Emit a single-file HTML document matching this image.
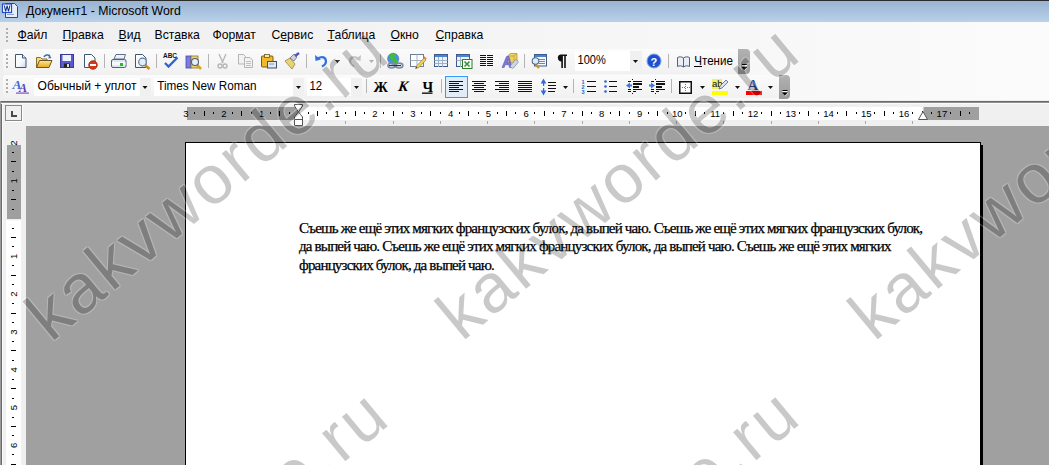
<!DOCTYPE html>
<html><head><meta charset="utf-8">
<style>
*{margin:0;padding:0;box-sizing:border-box}
html,body{width:1049px;height:465px;overflow:hidden;background:#f0f0f0;font-family:"Liberation Sans",sans-serif;position:relative}
.a{position:absolute}
#title{left:0;top:0;width:1049px;height:22px;border-top:1px solid #2b2b2b;background:linear-gradient(#99b3d1,#b9d1ea)}
#title .t{left:26px;top:3.3px;font-size:12.3px;line-height:14px;color:#000;white-space:nowrap}
#dock{left:0;top:22px;width:1049px;height:78px;background:linear-gradient(90deg,#efefef,#fbfbfb)}
.menu{top:29px;margin-left:-0.5px;font-size:12.2px;line-height:13px;color:#000;white-space:nowrap}
.menu u{text-decoration:underline;text-underline-offset:1px}
.tb{border-radius:3px;background:linear-gradient(#fbfbfb,#f1f1f1)}
#line{left:1px;top:101px;width:1048px;height:3px;background:linear-gradient(#6a6a6a 0 1px,#8f8f8f 1px 2px,#fbfbfb 2px 3px)}
#ruler{left:0;top:103px;width:1049px;height:364px;background:#f0f0f0}
#lb{left:0;top:101px;width:3px;height:365px;background:linear-gradient(90deg,#9a9a9a 0 1px,#6a6a6a 1px 2px,#fbfbfb 2px 3px)}
#gray{left:26px;top:126px;width:1023px;height:339px;background:#a0a0a0}
#page{left:185px;top:142px;width:796px;height:400px;background:#fff;border:1px solid #000}
#shadow{left:981px;top:145px;width:2px;height:400px;background:#000}
.doc{left:299px;top:219px;font-family:"Liberation Serif",serif;font-size:15px;line-height:18.4px;color:#000;white-space:nowrap;letter-spacing:-0.815px;-webkit-text-stroke:0.25px #000}
svg.ov{position:absolute;left:0;top:0}
.wml{position:absolute;left:0;top:0;width:1049px;height:465px;filter:url(#halo)}
.wm{position:absolute;font-family:"Liberation Sans",sans-serif;font-size:69px;line-height:1;white-space:nowrap;letter-spacing:2.95px;color:rgba(0,0,0,0.21);transform-origin:0 0;left:0;top:0}
</style></head><body>
<div id="title" class="a"><div class="t a">Документ1 - Microsoft Word</div></div>
<div id="dock" class="a"></div>
<div class="a menu" style="left:18px"><u>Ф</u>айл</div>
<div class="a menu" style="left:63px"><u>П</u>равка</div>
<div class="a menu" style="left:119px"><u>В</u>ид</div>
<div class="a menu" style="left:155px">Вст<u>а</u>вка</div>
<div class="a menu" style="left:213px">Фор<u>м</u>ат</div>
<div class="a menu" style="left:272px">С<u>е</u>рвис</div>
<div class="a menu" style="left:328px"><u>Т</u>аблица</div>
<div class="a menu" style="left:391px"><u>О</u>кно</div>
<div class="a menu" style="left:436px"><u>С</u>правка</div>
<div class="a tb" style="left:3px;top:49px;width:745px;height:25px"></div>
<div class="a tb" style="left:3px;top:75px;width:785px;height:23px"></div>
<div id="ruler" class="a"></div><div id="lb" class="a"></div><div id="line" class="a"></div>
<div id="gray" class="a"></div>
<div id="page" class="a"></div>
<div id="shadow" class="a"></div>
<svg class="ov" width="1049" height="465" viewBox="0 0 1049 465">
<!-- grips -->
<g fill="#aeaeae">
<rect x="6" y="28" width="2" height="2"/><rect x="6" y="32" width="2" height="2"/><rect x="6" y="36" width="2" height="2"/><rect x="6" y="40" width="2" height="2"/>
<rect x="6" y="54" width="2" height="2"/><rect x="6" y="58" width="2" height="2"/><rect x="6" y="62" width="2" height="2"/><rect x="6" y="66" width="2" height="2"/>
<rect x="6" y="79" width="2" height="2"/><rect x="6" y="83" width="2" height="2"/><rect x="6" y="87" width="2" height="2"/><rect x="6" y="91" width="2" height="2"/>
</g>
<!-- separators tb1 -->
<g fill="#b4b4b4">
<rect x="104" y="54" width="1" height="14"/><rect x="156" y="54" width="1" height="14"/><rect x="208" y="54" width="1" height="14"/>
<rect x="306" y="54" width="1" height="14"/><rect x="380" y="54" width="1" height="14"/><rect x="524" y="54" width="1" height="14"/>
<rect x="668" y="54" width="1" height="14"/>
<rect x="366" y="79" width="1" height="14"/><rect x="441" y="79" width="1" height="14"/><rect x="573" y="79" width="1" height="14"/><rect x="671" y="79" width="1" height="14"/>
</g>
<defs>
<linearGradient id="pg" x1="0" y1="0" x2="1" y2="1"><stop offset="0" stop-color="#fff"/><stop offset="0.6" stop-color="#f4f7fb"/><stop offset="1" stop-color="#c9d5e6"/></linearGradient>
<linearGradient id="fold" x1="0" y1="0" x2="0" y2="1"><stop offset="0" stop-color="#fbe89a"/><stop offset="1" stop-color="#e9a91c"/></linearGradient>
<linearGradient id="chev" x1="0" y1="0" x2="0" y2="1"><stop offset="0" stop-color="#b2b2b2"/><stop offset="1" stop-color="#9a9a9a"/></linearGradient>
</defs>
<!-- new doc -->
<path d="M15.5 54.5h7l3.5 3.5v9.5h-10.5z" fill="url(#pg)" stroke="#3f5677"/>
<path d="M22.5 54.5v3.5h3.5" fill="#e0e8f2" stroke="#3f5677"/>
<!-- open -->
<path d="M36.5 67.5v-10h4l1.5 1.5h5v8.5z" fill="#f7dc7a" stroke="#8b6f37"/>
<path d="M36.5 67.5l3-7h12.5l-3 7z" fill="url(#fold)" stroke="#6e5420"/>
<path d="M44 57c1-2 4-3 6-1" fill="none" stroke="#3d6db3" stroke-width="1.5"/><path d="M49 54.5l2.5 3.5l-3 0.5z" fill="#3d6db3"/>
<!-- save -->
<rect x="60.5" y="54.5" width="13" height="13" fill="#5a5ad0" stroke="#3b3b9a"/>
<rect x="62.5" y="55" width="8.5" height="6" fill="#eef2fb"/>
<rect x="64" y="63.5" width="6" height="4" fill="#222"/><rect x="67" y="64" width="2" height="3" fill="#ddd"/>
<!-- permission doc -->
<path d="M84.5 54.5h7l3.5 3.5v9.5h-10.5z" fill="url(#pg)" stroke="#3f5677"/>
<circle cx="93" cy="65" r="4.3" fill="#d63a12" stroke="#a8260a" stroke-width="0.8"/><rect x="90" y="64" width="6" height="2" fill="#fff"/>
<!-- print -->
<path d="M114 59l2-4.5h9.5l-1.5 4.5z" fill="#eef1f6" stroke="#5d6f8c"/>
<rect x="111.5" y="59.5" width="14.5" height="8" rx="1.5" fill="#dfe6f0" stroke="#4f6080"/>
<rect x="112" y="62" width="13.5" height="3" fill="#f7f9fc"/>
<rect x="120" y="63" width="3" height="3" fill="#1fbf1f"/>
<!-- preview -->
<path d="M135.5 54.5h7l3.5 3.5v9.5h-10.5z" fill="url(#pg)" stroke="#3f5677"/>
<path d="M145 65l4.5 4" stroke="#d08a1a" stroke-width="2.5"/>
<circle cx="142.5" cy="62" r="3.8" fill="#dfeefa" stroke="#667a90" stroke-width="1.2"/>
<!-- spell ABC -->
<text x="163" y="58.3" font-family="Liberation Sans" font-weight="bold" font-size="7.3" fill="#111" textLength="14" lengthAdjust="spacingAndGlyphs">ABC</text>
<path d="M165 63l3.5 3.5l9-9" fill="none" stroke="#2e62d9" stroke-width="2.3"/>
<!-- research -->
<rect x="186" y="56" width="5" height="12" fill="#7b7be6" stroke="#4848b0" stroke-width="0.8"/>
<rect x="191" y="56" width="7" height="12" fill="#f1d36b" stroke="#8b7030" stroke-width="0.8"/>
<path d="M197 65l4 4" stroke="#d7a318" stroke-width="2.5"/>
<circle cx="195" cy="62" r="3.5" fill="#e4effa" stroke="#535f70" stroke-width="1.1"/>
<!-- cut disabled -->
<g stroke="#b4b4b4" fill="none" stroke-width="1.3"><path d="M219 54l4 9M226 54l-4 9"/><circle cx="220" cy="66" r="2"/><circle cx="225" cy="66" r="2"/></g>
<!-- copy disabled -->
<path d="M238.5 54.5h5l2 2v7.5h-7z" fill="#f2f2f2" stroke="#b5b5b5"/>
<path d="M244.5 57.5h5.5l2.5 2.5v7.5h-8z" fill="#f2f2f2" stroke="#b5b5b5"/>
<g fill="#c0c0c0"><rect x="246" y="61" width="5" height="1"/><rect x="246" y="63" width="5" height="1"/><rect x="246" y="65" width="5" height="1"/></g>
<!-- paste -->
<rect x="261.5" y="56" width="11.5" height="11" rx="1" fill="#f0b92a" stroke="#7a5a1a"/>
<rect x="264.5" y="54.5" width="5" height="3" fill="#f6e7a2" stroke="#6b5a2a" stroke-width="0.8"/>
<rect x="267.5" y="61.5" width="9" height="6.5" fill="#dfe7f2" stroke="#3f5170"/>
<rect x="269" y="63.5" width="5" height="1" fill="#8a9ab8"/>
<!-- format painter -->
<path d="M285 61l5-3l5 6l-3 5z" fill="#e9d377" stroke="#9b8136" stroke-width="0.8"/>
<path d="M290 58l4-4l3 3l-3 4z" fill="#cfd3dc" stroke="#666d7c" stroke-width="0.8"/>
<path d="M295 56l4-3" stroke="#5252c9" stroke-width="2.6"/>
<!-- undo -->
<path d="M318 58.5c4-3 8-1 8 3c0 2.5-2 4-4 5" fill="none" stroke="#2f73e0" stroke-width="2.2"/>
<path d="M315 55l0.5 6l5.5-1.5z" fill="#2f73e0"/>
<path d="M335 60h5l-2.5 3z" fill="#111"/>
<!-- redo disabled -->
<path d="M358 58.5c-4-3-8-1-8 3c0 2.5 2 4 4 5" fill="none" stroke="#c4c4c4" stroke-width="2.2"/>
<path d="M361 55l-0.5 6l-5.5-1.5z" fill="#c4c4c4"/>
<path d="M369 60h5l-2.5 3z" fill="#b0b0b0"/>
<!-- hyperlink -->
<circle cx="393.2" cy="58.8" r="5.6" fill="#4c8fe6" stroke="#3a6fb8" stroke-width="0.6"/>
<path d="M389.5 55c1.5-1.8 4.5-2.2 6.5-0.8c-0.5 1.5-2 1.8-1.5 3.5c0.8 1.5 2.5 1.5 3.5 2.8c-0.5 1.8-1.5 3-3 3.5c-0.2-1.8-1.5-2.5-2.5-3.5c-1-1.2-2.5-1.5-3-3z" fill="#3fbe3a"/>
<g fill="none" stroke="#7d8ba3" stroke-width="1.7"><ellipse cx="391.6" cy="65.6" rx="3.6" ry="2.4"/><ellipse cx="399.2" cy="65.6" rx="3.6" ry="2.4"/></g>
<path d="M389 65.6h12" stroke="#26385a" stroke-width="1.2"/>
<!-- tables & borders -->
<rect x="410.5" y="54.5" width="13" height="12" fill="#fff" stroke="#6d8096"/>
<path d="M417 54.5v12M410.5 60.5h13" stroke="#a4b2c4"/>
<path d="M415.5 68.5l1.5-3l7-7.5l2 2l-7 7.5z" fill="#f0cf5a" stroke="#8a7030" stroke-width="0.6"/>
<path d="M423.5 57.5l1-1.2l2.2 2.2l-1.2 1.2z" fill="#e07a6a"/>
<path d="M415.5 68.5l0.8-1.6l0.9 0.9z" fill="#111"/>
<!-- insert table -->
<rect x="434.5" y="54.5" width="13" height="12" fill="#eef3fa" stroke="#3f5a86"/>
<rect x="435" y="55" width="12" height="2" fill="#4a84d8"/>
<g stroke="#9fb0c8"><path d="M434.5 60.5h13M434.5 63.5h13M438.5 57v10M442.5 57v10"/></g>
<!-- excel -->
<rect x="456.5" y="54.5" width="13" height="12" fill="#eef3fa" stroke="#3f5a86"/>
<rect x="457" y="55" width="12" height="2" fill="#4a84d8"/>
<g stroke="#9fb0c8"><path d="M456.5 60.5h6M460.5 57v10"/></g>
<rect x="462.5" y="59.5" width="9.5" height="9" fill="#fff" stroke="#2b7d2b"/>
<path d="M464.5 61.5l5 5M469.5 61.5l-5 5" stroke="#2a9a2a" stroke-width="1.6"/>
<!-- columns -->
<g fill="#111"><rect x="480" y="55" width="6" height="1"/><rect x="487" y="55" width="6" height="1"/><rect x="480" y="57" width="6" height="1"/><rect x="487" y="57" width="6" height="1"/><rect x="480" y="59" width="6" height="1"/><rect x="487" y="59" width="6" height="1"/><rect x="480" y="61" width="6" height="1"/><rect x="487" y="61" width="6" height="1"/><rect x="480" y="63" width="6" height="1"/><rect x="487" y="63" width="6" height="1"/><rect x="480" y="65" width="6" height="1"/><rect x="487" y="65" width="6" height="1"/></g>
<!-- drawing -->
<path d="M507.5 56l3-2.5h6.5v7l-3 2.5h-6.5z" fill="#f0d060" stroke="#9a7a30" stroke-width="0.6"/>
<path d="M507.5 56h6.5v7M514 56l3-2.5" fill="none" stroke="#b8962e" stroke-width="0.6"/>
<path d="M502 67.5l4.5-11h2.5l3 11h-2.5l-0.8-2.8h-3.6l-0.9 2.8z M507 62.7h2.4l-1.1-3.8z" fill="#7b78e0" fill-rule="evenodd" stroke="#5050b8" stroke-width="0.5"/>
<path d="M510.5 65.5l4.5-5.5a2 1.6 40 0 1 3 2.5l-4.5 5.5a2 1.6 40 0 1 -3 -2.5z" fill="#cdd6e4" stroke="#6a7890" stroke-width="0.6"/>
<!-- doc map -->
<rect x="534.5" y="54.5" width="12" height="11.5" fill="#f4f8fc" stroke="#3f5a86"/>
<rect x="535" y="55" width="11" height="2" fill="#4a84d8"/>
<g fill="#6f86b0"><rect x="539" y="59" width="6" height="1"/><rect x="539" y="61" width="6" height="1"/><rect x="539" y="63" width="6" height="1"/></g>
<path d="M535 64l4 4" stroke="#c99418" stroke-width="2.2"/>
<circle cx="535.5" cy="61" r="3.3" fill="#dcf0fb" stroke="#546c88" stroke-width="1.1"/>
<!-- pilcrow -->
<path d="M560.5 54.5h6.5v1.5h-1.2v12h-1.6v-12h-1.3v12h-1.6v-6.6a3.5 3.5 0 0 1 -0.8 -6.9z" fill="#111"/>
<!-- zoom box -->
<rect x="575" y="51" width="67" height="20" fill="#fff"/>
<rect x="630" y="51" width="12" height="20" fill="#f0f0f0"/>
<path d="M633 60h5l-2.5 3z" fill="#111"/>
<text x="577.5" y="64" font-family="Liberation Sans" font-size="12.5" fill="#000" textLength="28.3" lengthAdjust="spacingAndGlyphs">100%</text>
<!-- help -->
<circle cx="654" cy="61" r="7" fill="#2255cc" stroke="#7aa0e8" stroke-width="1"/>
<circle cx="654" cy="61" r="5.5" fill="#1a4fd0"/>
<text x="650.6" y="65.5" font-family="Liberation Sans" font-weight="bold" font-size="11" fill="#fff">?</text>
<!-- read book -->
<path d="M677.5 57.5c2-1 4-1 6 0.5c2-1.5 4-1.5 6-0.5v9c-2-1-4-1-6 0.5c-2-1.5-4-1.5-6-0.5z" fill="#e9eef6" stroke="#506482"/>
<path d="M683.5 58v9" stroke="#506482"/>
<text x="694.3" y="64.5" font-family="Liberation Sans" font-size="12.3" fill="#000" textLength="38.6" lengthAdjust="spacingAndGlyphs">Чтение</text>
<rect x="694" y="66" width="8" height="1" fill="#000"/>
<!-- chevron end tb1 -->
<path d="M738 49h8a4 4 0 0 1 4 4v17a4 4 0 0 1 -4 4h-8z" fill="url(#chev)"/>
<rect x="742" y="64" width="5" height="1" fill="#000"/><rect x="742" y="65" width="5" height="1" fill="#fff"/>
<path d="M741.5 67h6l-3 3z" fill="#000"/><path d="M744.5 70l3-3v1l-3 3z" fill="#fff" opacity="0.8"/>
<!-- chevron end tb2 -->
<path d="M779 75h7a4 4 0 0 1 4 4v16a4 4 0 0 1 -4 4h-7z" fill="url(#chev)"/>
<rect x="782.5" y="90" width="5" height="1" fill="#000"/><rect x="782.5" y="91" width="5" height="1" fill="#fff"/>
<path d="M782 92.5h6l-3 3z" fill="#000"/><path d="M785 95.5l3-3v1l-3 3z" fill="#fff" opacity="0.8"/>

<!-- TB2 -->
<!-- AA -->
<text x="12.5" y="89" font-family="Liberation Serif" font-style="italic" font-weight="bold" font-size="13.5" fill="#3f6ad8">A</text>
<text x="19" y="91.5" font-family="Liberation Serif" font-style="italic" font-weight="bold" font-size="12" fill="#5b3cb5">A</text>
<rect x="16" y="92.5" width="13" height="1.2" fill="#8050d0"/>
<!-- style combo -->
<rect x="34" y="78" width="117" height="18" fill="#fff"/>
<rect x="140" y="78" width="11" height="18" fill="#f0f0f0"/>
<path d="M142.5 86h5l-2.5 3z" fill="#111"/>
<text x="37.5" y="90" font-family="Liberation Sans" font-size="12.5" fill="#000" textLength="99" lengthAdjust="spacingAndGlyphs">Обычный + уплот</text>
<!-- font combo -->
<rect x="154" y="78" width="150" height="18" fill="#fff"/>
<rect x="293" y="78" width="11" height="18" fill="#f0f0f0"/>
<path d="M296 86h5l-2.5 3z" fill="#111"/>
<text x="157.2" y="90" font-family="Liberation Sans" font-size="12.5" fill="#000" textLength="99.3" lengthAdjust="spacingAndGlyphs">Times New Roman</text>
<!-- size combo -->
<rect x="307" y="78" width="55" height="18" fill="#fff"/>
<rect x="351" y="78" width="11" height="18" fill="#f0f0f0"/>
<path d="M354 86h5l-2.5 3z" fill="#111"/>
<text x="309.5" y="90" font-family="Liberation Sans" font-size="12.5" fill="#000" textLength="12.6" lengthAdjust="spacingAndGlyphs">12</text>
<!-- B I U -->
<text x="373.5" y="91.5" font-family="Liberation Serif" font-weight="bold" font-size="14.5" fill="#000">Ж</text>
<text x="398" y="91.5" font-family="Liberation Serif" font-weight="bold" font-style="italic" font-size="14.5" fill="#000" transform="skewX(-8) translate(12.7 0)">К</text>
<text x="422.5" y="91.5" font-family="Liberation Serif" font-weight="bold" font-size="14.5" fill="#000">Ч</text>
<rect x="422" y="92.5" width="10.5" height="1.3" fill="#000"/>
<!-- align left selected -->
<rect x="445.5" y="76.5" width="22" height="21" fill="#e2ecf8" stroke="#3399ff"/>
<g fill="#111">
<rect x="449" y="81" width="14" height="1"/><rect x="449" y="83" width="10" height="1"/><rect x="449" y="85" width="14" height="1"/><rect x="449" y="87" width="10" height="1"/><rect x="449" y="89" width="14" height="1"/><rect x="449" y="91" width="10" height="1"/>
<!-- center -->
<rect x="472" y="81" width="14" height="1"/><rect x="474" y="83" width="10" height="1"/><rect x="472" y="85" width="14" height="1"/><rect x="474" y="87" width="10" height="1"/><rect x="472" y="89" width="14" height="1"/><rect x="474" y="91" width="10" height="1"/>
<!-- right -->
<rect x="495" y="81" width="14" height="1"/><rect x="499" y="83" width="10" height="1"/><rect x="495" y="85" width="14" height="1"/><rect x="499" y="87" width="10" height="1"/><rect x="495" y="89" width="14" height="1"/><rect x="499" y="91" width="10" height="1"/>
<!-- justify -->
<rect x="518" y="81" width="14" height="1"/><rect x="518" y="83" width="14" height="1"/><rect x="518" y="85" width="14" height="1"/><rect x="518" y="87" width="14" height="1"/><rect x="518" y="89" width="14" height="1"/><rect x="518" y="91" width="14" height="1"/>
<!-- line spacing lines -->
<rect x="548" y="82" width="8" height="1"/><rect x="548" y="85" width="8" height="1"/><rect x="548" y="88" width="8" height="1"/><rect x="548" y="91" width="7" height="1"/>
<!-- numbered lines -->
<rect x="587" y="81" width="9" height="1"/><rect x="587" y="86" width="9" height="1"/><rect x="587" y="91" width="9" height="1"/>
<!-- bullets lines -->
<rect x="609" y="81" width="8" height="1"/><rect x="609" y="86" width="8" height="1"/><rect x="609" y="91" width="8" height="1"/>
</g>
<path d="M543.5 78.5l2.8 5h-5.6z M543.5 95.5l2.8 -5h-5.6z" fill="#2f6ae0"/><rect x="543" y="83" width="1.2" height="3" fill="#2f6ae0"/><rect x="543" y="88" width="1.2" height="3" fill="#2f6ae0"/>
<path d="M563 86h5l-2.5 3z" fill="#111"/>
<g fill="#2f5fd0" font-family="Liberation Sans" font-weight="bold" font-size="5.5"><text x="581.5" y="84">1</text><text x="581.5" y="89">2</text><text x="581.5" y="94">3</text></g>
<g fill="#2f5fd0"><circle cx="605.5" cy="81.5" r="1.3"/><circle cx="605.5" cy="86.5" r="1.3"/><circle cx="605.5" cy="91.5" r="1.3"/></g>
<!-- decrease indent -->
<g fill="#111"><rect x="628" y="81" width="3" height="1"/><rect x="633" y="81" width="9" height="1"/><rect x="633" y="83" width="9" height="2"/><rect x="633" y="86" width="6" height="2"/><rect x="628" y="89" width="3" height="1"/><rect x="633" y="89" width="9" height="1"/><rect x="628" y="91" width="3" height="1"/><rect x="633" y="91" width="3" height="1"/>
<rect x="632" y="79" width="1" height="1"/><rect x="632" y="93" width="1" height="1"/></g>
<path d="M626 85.5l4-3v2h2v2h-2v2z" fill="#3b78e0"/>
<!-- increase indent -->
<g fill="#111"><rect x="651" y="81" width="3" height="1"/><rect x="656" y="81" width="9" height="1"/><rect x="656" y="83" width="9" height="2"/><rect x="656" y="86" width="6" height="2"/><rect x="651" y="89" width="3" height="1"/><rect x="656" y="89" width="9" height="1"/><rect x="651" y="91" width="3" height="1"/><rect x="656" y="91" width="3" height="1"/>
<rect x="655" y="79" width="1" height="1"/><rect x="655" y="93" width="1" height="1"/></g>
<path d="M655 85.5l-4-3v2h-2v2h2v2z" fill="#3b78e0"/>
<!-- borders -->
<rect x="679.75" y="81.75" width="11.5" height="11.5" fill="#fff" stroke="#111" stroke-width="1.5"/>
<g fill="#6a7aa0"><rect x="685" y="84" width="1" height="1"/><rect x="685" y="86" width="1" height="1"/><rect x="685" y="88" width="1" height="1"/><rect x="685" y="90" width="1" height="1"/><rect x="682" y="87" width="1" height="1"/><rect x="684" y="87" width="1" height="1"/><rect x="687" y="87" width="1" height="1"/><rect x="689" y="87" width="1" height="1"/></g>
<path d="M700 86h5l-2.5 3z" fill="#111"/>
<!-- highlight -->
<rect x="712" y="79" width="10" height="10" fill="#f0f070"/>
<text x="712" y="87" font-family="Liberation Sans" font-size="9.5" fill="#111">ab</text>
<path d="M719 89l1-3l6-6l2 2l-6 6z" fill="#d8e4f4" stroke="#4a6090" stroke-width="0.8"/>
<rect x="712" y="91" width="16" height="4" fill="#ffff00"/>
<path d="M735 86h5l-2.5 3z" fill="#111"/>
<!-- font color -->
<text x="747.5" y="89.5" font-family="Liberation Serif" font-weight="bold" font-size="15" fill="#2a4a9a">A</text>
<rect x="746" y="91" width="16" height="4" fill="#ff0000"/>
<path d="M768 86h5l-2.5 3z" fill="#111"/>
<!-- word title icon -->
<path d="M5.5 3.5h9l3 3v11h-12z" fill="#e6eefa" stroke="#33486e"/>
<rect x="7" y="14" width="7" height="1" fill="#8aa0c8"/>
<rect x="2.5" y="4" width="9" height="8.5" fill="#fff" stroke="#1f4fc0" stroke-width="1.2"/>
<path d="M3.8 5.5l1.3 6h1.1l0.9-3.5l0.9 3.5h1.1l1.3-6h-1.1l-0.8 3.8l-0.9-3.8h-1l-0.9 3.8l-0.8-3.8z" fill="#17308a"/>

<rect x="187" y="107" width="111.60" height="13" fill="#9f9f9f"/><rect x="298.60" y="107" width="624.90" height="13" fill="#fff"/><rect x="923.5" y="107" width="55.5" height="13" fill="#9f9f9f"/><g fill="#000" font-family="Liberation Sans" font-size="9.5"><text x="186.02" y="117" text-anchor="middle">3</text><rect x="194" y="112" width="1" height="2"/><rect x="204" y="111" width="1" height="5"/><rect x="213" y="112" width="1" height="2"/><text x="223.81" y="117" text-anchor="middle">2</text><rect x="232" y="112" width="1" height="2"/><rect x="241" y="111" width="1" height="5"/><rect x="251" y="112" width="1" height="2"/><text x="261.61" y="117" text-anchor="middle">1</text><rect x="270" y="112" width="1" height="2"/><rect x="279" y="111" width="1" height="5"/><rect x="289" y="112" width="1" height="2"/><rect x="308" y="112" width="1" height="2"/><rect x="317" y="111" width="1" height="5"/><rect x="326" y="112" width="1" height="2"/><text x="337.20" y="117" text-anchor="middle">1</text><rect x="345" y="112" width="1" height="2"/><rect x="355" y="111" width="1" height="5"/><rect x="364" y="112" width="1" height="2"/><text x="374.99" y="117" text-anchor="middle">2</text><rect x="383" y="112" width="1" height="2"/><rect x="393" y="111" width="1" height="5"/><rect x="402" y="112" width="1" height="2"/><text x="412.79" y="117" text-anchor="middle">3</text><rect x="421" y="112" width="1" height="2"/><rect x="430" y="111" width="1" height="5"/><rect x="440" y="112" width="1" height="2"/><text x="450.58" y="117" text-anchor="middle">4</text><rect x="459" y="112" width="1" height="2"/><rect x="468" y="111" width="1" height="5"/><rect x="478" y="112" width="1" height="2"/><text x="488.38" y="117" text-anchor="middle">5</text><rect x="497" y="112" width="1" height="2"/><rect x="506" y="111" width="1" height="5"/><rect x="515" y="112" width="1" height="2"/><text x="526.17" y="117" text-anchor="middle">6</text><rect x="534" y="112" width="1" height="2"/><rect x="544" y="111" width="1" height="5"/><rect x="553" y="112" width="1" height="2"/><text x="563.96" y="117" text-anchor="middle">7</text><rect x="572" y="112" width="1" height="2"/><rect x="582" y="111" width="1" height="5"/><rect x="591" y="112" width="1" height="2"/><text x="601.76" y="117" text-anchor="middle">8</text><rect x="610" y="112" width="1" height="2"/><rect x="619" y="111" width="1" height="5"/><rect x="629" y="112" width="1" height="2"/><text x="639.56" y="117" text-anchor="middle">9</text><rect x="648" y="112" width="1" height="2"/><rect x="657" y="111" width="1" height="5"/><rect x="667" y="112" width="1" height="2"/><text x="677.35" y="117" text-anchor="middle">10</text><rect x="685" y="112" width="1" height="2"/><rect x="695" y="111" width="1" height="5"/><rect x="704" y="112" width="1" height="2"/><text x="715.14" y="117" text-anchor="middle">11</text><rect x="723" y="112" width="1" height="2"/><rect x="733" y="111" width="1" height="5"/><rect x="742" y="112" width="1" height="2"/><text x="752.94" y="117" text-anchor="middle">12</text><rect x="761" y="112" width="1" height="2"/><rect x="771" y="111" width="1" height="5"/><rect x="780" y="112" width="1" height="2"/><text x="790.74" y="117" text-anchor="middle">13</text><rect x="799" y="112" width="1" height="2"/><rect x="808" y="111" width="1" height="5"/><rect x="818" y="112" width="1" height="2"/><text x="828.53" y="117" text-anchor="middle">14</text><rect x="837" y="112" width="1" height="2"/><rect x="846" y="111" width="1" height="5"/><rect x="856" y="112" width="1" height="2"/><text x="866.33" y="117" text-anchor="middle">15</text><rect x="874" y="112" width="1" height="2"/><rect x="884" y="111" width="1" height="5"/><rect x="893" y="112" width="1" height="2"/><text x="904.12" y="117" text-anchor="middle">16</text><rect x="912" y="112" width="1" height="2"/><rect x="922" y="111" width="1" height="5"/><rect x="931" y="112" width="1" height="2"/><text x="941.91" y="117" text-anchor="middle">17</text><rect x="950" y="112" width="1" height="2"/><rect x="960" y="111" width="1" height="5"/><rect x="969" y="112" width="1" height="2"/></g><g fill="#a8a8a8"><rect x="345" y="121" width="1" height="3"/><rect x="393" y="121" width="1" height="3"/><rect x="440" y="121" width="1" height="3"/><rect x="487" y="121" width="1" height="3"/><rect x="534" y="121" width="1" height="3"/><rect x="582" y="121" width="1" height="3"/><rect x="629" y="121" width="1" height="3"/><rect x="676" y="121" width="1" height="3"/><rect x="723" y="121" width="1" height="3"/><rect x="771" y="121" width="1" height="3"/><rect x="818" y="121" width="1" height="3"/><rect x="865" y="121" width="1" height="3"/><rect x="912" y="121" width="1" height="3"/></g><path d="M294.5 104.5H302.5V106L298.5 112L302.5 117V125.5H294.5V117L298.5 112L294.5 106Z" fill="#fff" stroke="#555"/><path d="M294.5 119.5H302.5" stroke="#555"/><path d="M918.5 119.5h9l-4.5 -8z" fill="#fff" stroke="#555"/><rect x="5.5" y="105.5" width="16" height="15" fill="#f0f0f0" stroke="#8a8a8a"/><path d="M6 121.5h16.5v-16" stroke="#fff" fill="none"/><path d="M11 111h2v4h4v2h-6z" fill="#484848"/><rect x="7" y="145" width="14" height="74" fill="#9f9f9f"/><rect x="6" y="220.5" width="15" height="250" fill="#fff"/><g fill="#000" font-family="Liberation Sans" font-size="9.5"><text transform="translate(16.8 143.01) rotate(-90)" x="0" y="0" text-anchor="middle">2</text><rect x="12" y="152" width="2" height="1"/><rect x="11" y="161" width="5" height="1"/><rect x="12" y="171" width="2" height="1"/><text transform="translate(16.8 180.81) rotate(-90)" x="0" y="0" text-anchor="middle">1</text><rect x="12" y="190" width="2" height="1"/><rect x="11" y="199" width="5" height="1"/><rect x="12" y="209" width="2" height="1"/><rect x="12" y="228" width="2" height="1"/><rect x="11" y="237" width="5" height="1"/><rect x="12" y="246" width="2" height="1"/><text transform="translate(16.8 256.39) rotate(-90)" x="0" y="0" text-anchor="middle">1</text><rect x="12" y="265" width="2" height="1"/><rect x="11" y="275" width="5" height="1"/><rect x="12" y="284" width="2" height="1"/><text transform="translate(16.8 294.19) rotate(-90)" x="0" y="0" text-anchor="middle">2</text><rect x="12" y="303" width="2" height="1"/><rect x="11" y="313" width="5" height="1"/><rect x="12" y="322" width="2" height="1"/><text transform="translate(16.8 331.99) rotate(-90)" x="0" y="0" text-anchor="middle">3</text><rect x="12" y="341" width="2" height="1"/><rect x="11" y="350" width="5" height="1"/><rect x="12" y="360" width="2" height="1"/><text transform="translate(16.8 369.78) rotate(-90)" x="0" y="0" text-anchor="middle">4</text><rect x="12" y="379" width="2" height="1"/><rect x="11" y="388" width="5" height="1"/><rect x="12" y="398" width="2" height="1"/><text transform="translate(16.8 407.58) rotate(-90)" x="0" y="0" text-anchor="middle">5</text><rect x="12" y="417" width="2" height="1"/><rect x="11" y="426" width="5" height="1"/><rect x="12" y="435" width="2" height="1"/><text transform="translate(16.8 445.37) rotate(-90)" x="0" y="0" text-anchor="middle">6</text><rect x="12" y="454" width="2" height="1"/><rect x="11" y="464" width="5" height="1"/></g>
</svg>
<div class="a doc">Съешь же ещё этих мягких французских булок, да выпей чаю. Съешь же ещё этих мягких французских булок,<br>да выпей чаю. Съешь же ещё этих мягких французских булок, да выпей чаю. Съешь же ещё этих мягких<br>французских булок, да выпей чаю.</div>
<div class="wml"><div class="wm" style="transform:translate(53.90px,346.45px) rotate(-39.8deg) translate(0,-62.45px)">kakvworde.ru</div><div class="wm" style="transform:translate(53.90px,709.95px) rotate(-39.8deg) translate(0,-62.45px)">kakvworde.ru</div><div class="wm" style="transform:translate(464.80px,345.55px) rotate(-39.8deg) translate(0,-62.45px)">kakvworde.ru</div><div class="wm" style="transform:translate(464.80px,709.05px) rotate(-39.8deg) translate(0,-62.45px)">kakvworde.ru</div><div class="wm" style="transform:translate(877.15px,345.55px) rotate(-39.8deg) translate(0,-62.45px)">kakvworde.ru</div><div class="wm" style="transform:translate(877.15px,709.05px) rotate(-39.8deg) translate(0,-62.45px)">kakvworde.ru</div></div>
<svg width="0" height="0" style="position:absolute"><filter id="halo" color-interpolation-filters="sRGB" x="0" y="0" width="1049" height="465" filterUnits="userSpaceOnUse"><feColorMatrix in="SourceAlpha" type="matrix" values="0 0 0 0 0  0 0 0 0 0  0 0 0 0 0  0 0 0 4.8 0" result="sa"/><feMorphology in="sa" operator="dilate" radius="1" result="d"/><feComposite in="d" in2="sa" operator="out" result="ring"/><feFlood flood-color="#fff" flood-opacity="0.22"/><feComposite in2="ring" operator="in" result="wr"/><feMerge><feMergeNode in="wr"/><feMergeNode in="SourceGraphic"/></feMerge></filter></svg>
</body></html>
